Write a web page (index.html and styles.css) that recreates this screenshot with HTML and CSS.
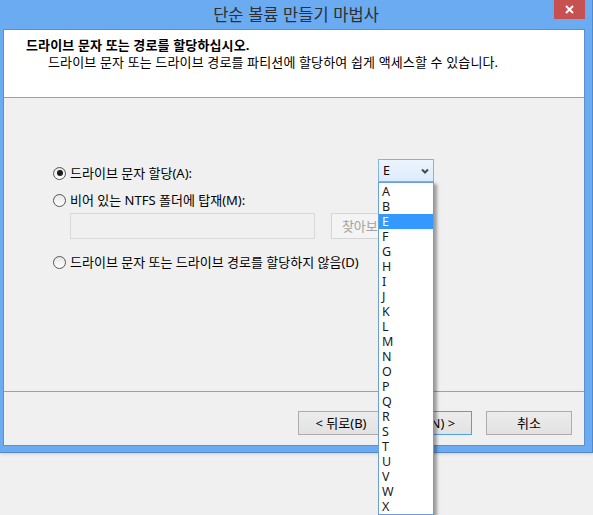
FILE: index.html
```html
<!DOCTYPE html>
<html lang="ko">
<head>
<meta charset="utf-8">
<title>단순 볼륨 만들기 마법사</title>
<link rel="stylesheet" href="styles.css">
</head>
<body>
<div class="window">
  <div class="titlebar">
    <div class="title">단순 볼륨 만들기 마법사</div>
    <div class="close">
      <svg width="31" height="19" viewBox="0 0 31 19"><path d="M12 6 L19 13 M19 6 L12 13" stroke="#fff" stroke-width="2" fill="none"/></svg>
    </div>
  </div>
  <div class="frame">
    <div class="header">
      <div class="h-title">드라이브 문자 또는 경로를 할당하십시오.</div>
      <div class="h-sub">드라이브 문자 또는 드라이브 경로를 파티션에 할당하여 쉽게 액세스할 수 있습니다.</div>
    </div>
    <div class="body">
      <div class="row-letter">
        <div class="opt opt-first"><span class="radio checked"></span>드라이브 문자 할당(A):</div>
        <div class="combo">
          <span>E</span>
          <svg width="8" height="6" viewBox="0 0 8 6"><path d="M1 1.5 L4 4.5 L7 1.5" stroke="#4a4a4a" stroke-width="2" fill="none"/></svg>
          <ul class="list">
            <li>A</li><li>B</li><li class="sel">E</li><li>F</li><li>G</li><li>H</li><li>I</li><li>J</li><li>K</li><li>L</li><li>M</li><li>N</li><li>O</li><li>P</li><li>Q</li><li>R</li><li>S</li><li>T</li><li>U</li><li>V</li><li>W</li><li>X</li>
          </ul>
        </div>
      </div>
      <div class="opt opt-mount"><span class="radio"></span>비어 있는 NTFS 폴더에 탑재(M):</div>
      <div class="mount-row">
        <div class="path"></div>
        <div class="btn browse">찾아보기(R)...</div>
      </div>
      <div class="opt opt-none"><span class="radio"></span>드라이브 문자 또는 드라이브 경로를 할당하지 않음(D)</div>
    </div>
    <div class="footer">
      <div class="btn">&lt; 뒤로(B)</div>
      <div class="btn default">다음(N) &gt;</div>
      <div class="btn cancel">취소</div>
    </div>
  </div>
</div>
</body>
</html>
```

FILE: styles.css
```css
html, body {
  margin: 0;
  padding: 0;
}
body {
  width: 593px;
  height: 515px;
  overflow: hidden;
  background: #f0f0f0;
  font-family: "Noto Sans", "Noto Sans CJK KR", sans-serif;
  font-size: 13px;
  line-height: 16px;
  color: #000;
}
.window {
  width: 593px;
  box-sizing: border-box;
  background: #6aabf2;
  border-right: 1px solid #5189cb;
  border-bottom: 1px solid #5189cb;
  box-shadow: 0 1px 3px rgba(0, 0, 0, 0.15);
}
.titlebar {
  height: 29px;
  display: flex;
  align-items: flex-start;
}
.title {
  flex: 1;
  padding-left: 38px;
  text-align: center;
  font-family: "Noto Sans CJK KR", sans-serif;
  font-size: 16.5px;
  line-height: 28px;
  color: #2f2f2f;
}
.close {
  width: 31px;
  height: 19px;
  margin-right: 7px;
  background: #c75050;
}
.close svg {
  display: block;
}
.frame {
  margin: 0 7px 6px 3px;
  border: 1px solid #5e8fcb;
  background: #f0f0f0;
}
.header {
  height: 68px;
  box-sizing: border-box;
  background: #fff;
  border-bottom: 1px solid #a0a0a0;
  padding: 7px 0 0 22px;
  letter-spacing: 0.14px;
}
.h-title {
  font-weight: bold;
}
.h-sub {
  padding-left: 22px;
  margin-top: 0.5px;
}
.body {
  height: 294px;
  box-sizing: border-box;
  border-bottom: 1px solid #a0a0a0;
  padding: 61px 0 0 49px;
}
.row-letter {
  display: grid;
  grid-template-columns: 325px 56px;
  align-items: start;
  height: 23px;
}
.opt {
  display: flex;
  align-items: center;
  height: 16px;
  white-space: nowrap;
}
.opt-first {
  margin-top: 6px;
}
.opt-mount {
  margin-top: 10px;
}
.opt-none {
  margin-top: 15px;
}
.radio {
  width: 13px;
  height: 13px;
  box-sizing: border-box;
  border: 1px solid #555;
  border-radius: 50%;
  background: linear-gradient(#e6e6e6, #ffffff);
  margin-right: 4px;
  display: flex;
  align-items: center;
  justify-content: center;
  flex: none;
}
.radio.checked::after {
  content: "";
  width: 6px;
  height: 6px;
  border-radius: 50%;
  background: #1c1c1c;
}
.combo {
  position: relative;
  width: 56px;
  height: 23px;
  box-sizing: border-box;
  border: 1px solid #7eb4ea;
  background: linear-gradient(#ecf4fc, #dcecfc);
  display: flex;
  align-items: center;
  justify-content: space-between;
  padding: 0 4px 0 4px;
  line-height: 21px;
  font-size: 12.5px;
}
.combo svg {
  display: block;
}
.list {
  position: absolute;
  top: 22px;
  left: -1px;
  width: 56px;
  box-sizing: border-box;
  margin: 0;
  padding: 1px 0 0 0;
  list-style: none;
  background: #fff;
  border: 1px solid #6a9fd8;
  box-shadow: 3px 2px 3px rgba(0, 0, 0, 0.35);
  z-index: 5;
  font-size: 12.5px;
}
.list li {
  height: 15px;
  line-height: 15px;
  padding-left: 3px;
  color: #1a1a1a;
}
.list li.sel {
  background: #3399ff;
  color: #fff;
}
.mount-row {
  display: flex;
  margin-top: 5px;
  padding-left: 17px;
}
.path {
  width: 245px;
  height: 26px;
  box-sizing: border-box;
  border: 1px solid #d9d9d9;
  background: #f0f0f0;
}
.btn {
  width: 86px;
  height: 24px;
  box-sizing: border-box;
  border: 1px solid #adadad;
  background: linear-gradient(#ececec, #e2e2e2);
  display: flex;
  align-items: center;
  justify-content: center;
  white-space: nowrap;
}
.btn.browse {
  width: 96px;
  height: 26px;
  margin-left: 16px;
  border-color: #d5d5d5;
  background: #f4f4f4;
  color: #a3a3a3;
}
.footer {
  height: 53px;
  box-sizing: border-box;
  padding: 19px 12px 0 0;
  display: flex;
  justify-content: flex-end;
  align-items: flex-start;
}
.btn.default {
  margin-left: 2px;
  border-color: #4ea0ef;
}
.btn.cancel {
  margin-left: 14px;
}
```
